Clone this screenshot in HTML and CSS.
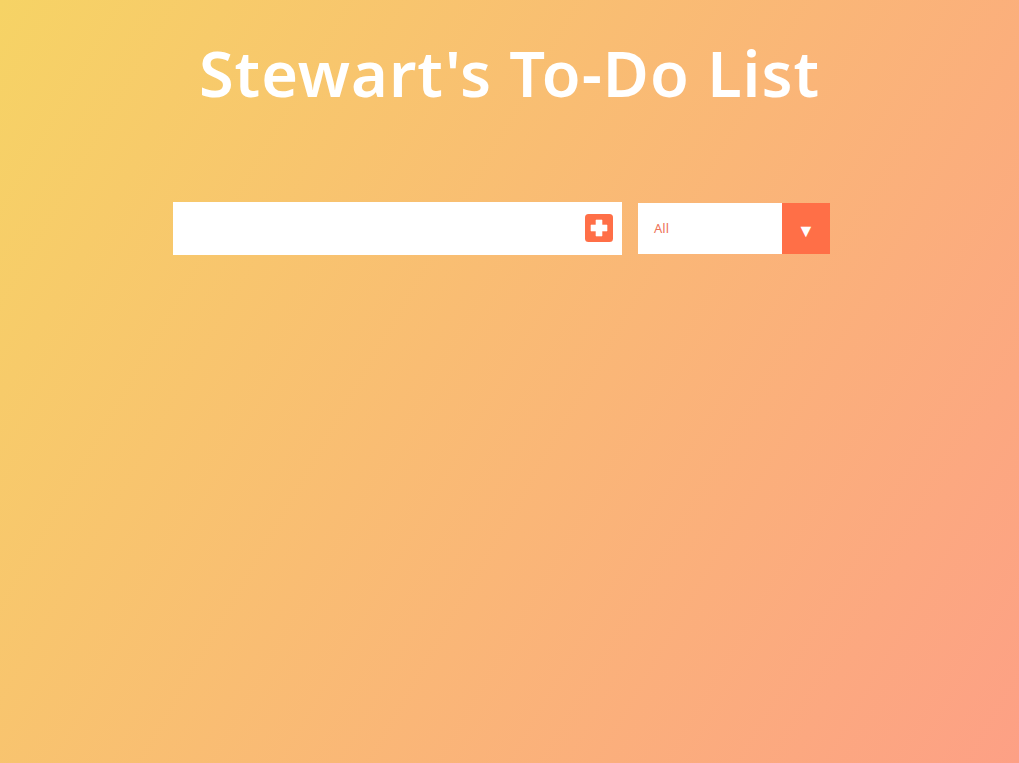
FILE: index.html
```html
<!DOCTYPE html>
<html lang="en">
<head>
<meta charset="utf-8">
<title>Stewart's To-Do List</title>
<link rel="stylesheet" href="styles.css">
</head>
<body>
<header class="header">
  <h1 class="title">Stewart's To-Do List</h1>
</header>
<form class="todo-form">
  <div class="input-box">
    <input class="todo-input" type="text" aria-label="New todo">
    <button class="add-btn" type="button" aria-label="Add">
      <svg width="28" height="28" viewBox="0 0 28 28">
        <rect x="0" y="0" width="28" height="28" rx="3.5" fill="#ff6f47"/>
        <path d="M11 6h6v5h5v6h-5v5h-6v-5h-5v-6h5z" fill="#fff" stroke="#fff" stroke-width="0.6" stroke-linejoin="round"/>
      </svg>
    </button>
  </div>
  <div class="select">
    <span class="select-value">All</span>
    <span class="select-arrow">&#9660;</span>
  </div>
</form>
</body>
</html>
```
FILE: styles.css
```css
* { box-sizing: border-box; }
html, body { margin: 0; padding: 0; }
body {
  min-height: 100vh;
  background-image: linear-gradient(120deg, #f6d365 0%, #fda085 100%);
  color: #fff;
  font-family: "Noto Sans", "Open Sans", sans-serif;
}
.header {
  height: 152px;
  display: flex;
  justify-content: center;
  align-items: center;
}
.title {
  margin: 0;
  font-size: 63px;
  font-weight: 600;
  line-height: 1;
  padding-bottom: 8px;
  letter-spacing: 1px;
}
.todo-form {
  height: 152px;
  display: flex;
  justify-content: center;
  align-items: center;
  gap: 16px;
  padding-right: 16px;
}
.input-box {
  width: 449px;
  height: 53px;
  background: #fff;
  display: flex;
  align-items: center;
}
.todo-input {
  flex: 1;
  height: 100%;
  border: none;
  outline: none;
  background: transparent;
  font-size: 24px;
  padding: 0 12px;
}
.add-btn {
  border: none;
  background: transparent;
  padding: 0;
  margin-right: 9px;
  width: 28px;
  height: 28px;
  display: flex;
}
.select {
  width: 192px;
  height: 51px;
  background: #fff;
  display: flex;
  align-items: center;
}
.select-value {
  flex: 1;
  padding-left: 16px;
  font-size: 13px;
  color: #ee735a;
}
.select-arrow {
  width: 48px;
  height: 100%;
  background: #ff6f47;
  color: #fff;
  display: flex;
  align-items: center;
  justify-content: center;
  font-size: 18px;
  padding-top: 4px;
}
```
